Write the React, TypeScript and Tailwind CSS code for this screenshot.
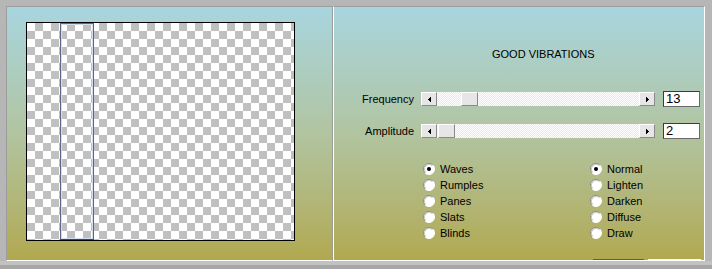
import React from "react";

const font = "font-['Liberation_Sans',Arial,sans-serif]";

function Arrow({ dir }: { dir: "left" | "right" }) {
  return (
    <div className="w-[16px] h-[14px] flex-none flex items-center justify-center bg-[#e6e6e6] border border-t-white border-l-white border-r-[#8a8a8a] border-b-[#8a8a8a]">
      <svg width="3" height="5" viewBox="0 0 3 5" shapeRendering="crispEdges">
        {dir === "left" ? (
          <polygon points="3,0 3,5 0,2.5" fill="#000" />
        ) : (
          <polygon points="0,0 0,5 3,2.5" fill="#000" />
        )}
      </svg>
    </div>
  );
}

function Slider({ label, value, spacer }: { label: string; value: string; spacer: string }) {
  return (
    <div className="flex items-center h-[16px]">
      <div className="w-[81px] text-right text-[11px] leading-[13px] text-black pr-[1px]">{label}</div>
      <div className="ml-[6px] w-[234px] h-[14px] flex">
        <Arrow dir="left" />
        <div className="flex-1 flex bg-[conic-gradient(#ffffff_25%,#e8e8e8_0_50%,#ffffff_0_75%,#e8e8e8_0)] bg-size-[2px_2px]">
          <div className={spacer} />
          <div className="w-[17px] h-[14px] bg-[#e6e6e6] border border-t-white border-l-white border-r-[#8a8a8a] border-b-[#8a8a8a]" />
        </div>
        <Arrow dir="right" />
      </div>
      <div className="ml-[8px] w-[37px] h-[16px] bg-white border border-[#6a6a6a] border-t-[#3c3c3c] border-l-[#3c3c3c] pl-[2px] text-[13px] leading-[14px] text-black">
        {value}
      </div>
    </div>
  );
}

function Radio({ label, checked }: { label: string; checked?: boolean }) {
  return (
    <div className="flex items-center h-[16px]">
      <svg width="12" height="12" viewBox="0 0 12 12" className="flex-none">
        <circle cx="6" cy="6" r="5.5" fill="#fff" />
        <path d="M2.11 9.89 A5.5 5.5 0 0 1 9.89 2.11" stroke="#8c8c8c" fill="none" />
        <path d="M9.89 2.11 A5.5 5.5 0 0 1 2.11 9.89" stroke="#ffffff" fill="none" />
        <path d="M2.82 9.18 A4.5 4.5 0 0 1 9.18 2.82" stroke="#c8c8c8" fill="none" />
        {checked && <circle cx="6" cy="6" r="2" fill="#000" />}
      </svg>
      <span className="ml-[5px] text-[11px] leading-[13px] text-black">{label}</span>
    </div>
  );
}

export default function App() {
  return (
    <div className={`w-[712px] h-[269px] bg-[#b6b6b6] flex flex-col overflow-hidden ${font}`}>
      <div className="flex pt-[6px] pl-[6px]">
        {/* preview */}
        <div className="w-[327px] h-[255px] flex-none border-l border-t border-r border-b border-[#9c9c9c] border-b-white bg-linear-to-b from-[#a8d5df] via-[#b1c4a0] to-[#b1a94f] pl-[19px] pt-[15px]">
          <div className="relative w-[269px] h-[219px] border border-black bg-[conic-gradient(#c0c0c0_25%,#ffffff_0_50%,#c0c0c0_0_75%,#ffffff_0)] bg-size-[16px_16px]">
            <div className="absolute left-[33px] top-0 w-[34px] h-[217px] border border-[#5c6684] border-b-[#3c4460] shadow-[inset_1px_1px_0_#d4dcf0,inset_-1px_-1px_0_#d4dcf0]" />
          </div>
        </div>

        {/* settings */}
        <div className="w-[372px] h-[255px] flex-none flex flex-col border-t border-[#9c9c9c] border-l border-l-white border-r border-r-white border-b border-b-white bg-linear-to-b from-[#a8d5df] via-[#b1c4a0] to-[#b1a94f]">
          <div className="mt-[41px] pl-[158px] text-[11px] leading-[13px] text-black">GOOD VIBRATIONS</div>

          <div className="mt-[30px] flex flex-col gap-[16px]">
            <Slider label="Frequency" value="13" spacer="w-[24px]" />
            <Slider label="Amplitude" value="2" spacer="w-[1px]" />
          </div>

          <div className="mt-[22px] pl-[89px] grid grid-cols-[167px_1fr]">
            <div className="flex flex-col">
              <Radio label="Waves" checked />
              <Radio label="Rumples" />
              <Radio label="Panes" />
              <Radio label="Slats" />
              <Radio label="Blinds" />
            </div>
            <div className="flex flex-col">
              <Radio label="Normal" checked />
              <Radio label="Lighten" />
              <Radio label="Darken" />
              <Radio label="Diffuse" />
              <Radio label="Draw" />
            </div>
          </div>

          <div className="mt-auto flex h-[1px] pl-[259px]">
            <div className="w-[51px] bg-[#5c5c5c]" />
            <div className="ml-[4px] w-[53px] bg-white" />
          </div>
        </div>
      </div>
      <div className="h-[4px] bg-[#c2c2c2]" />
      <div className="flex-1 bg-[#a6a6a6]" />
    </div>
  );
}
